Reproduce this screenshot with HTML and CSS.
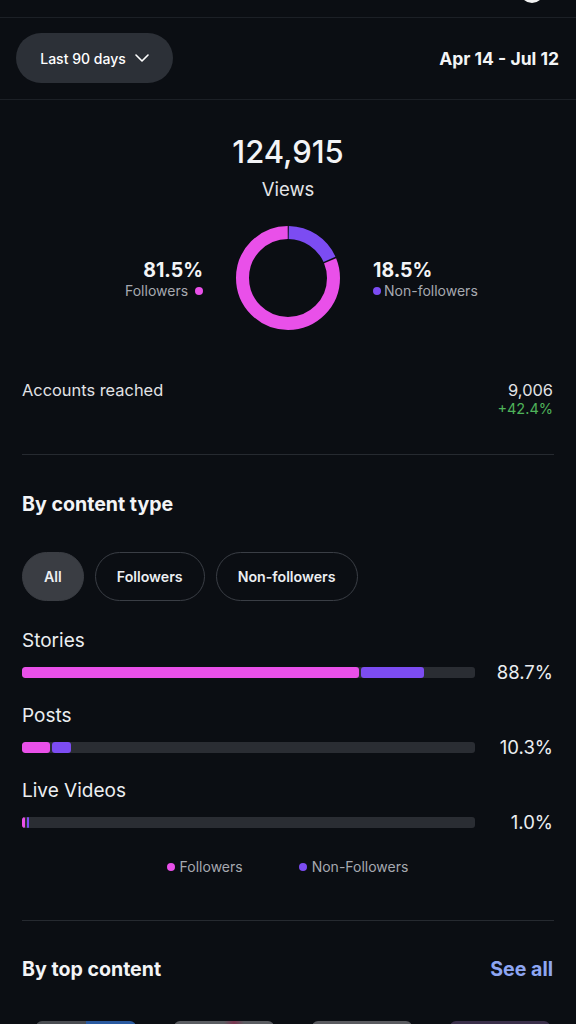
FILE: index.html
```html
<!DOCTYPE html>
<html lang="en">
<head>
<meta charset="utf-8">
<title>Views</title>
<link rel="stylesheet" href="styles.css">
</head>
<body>
<div class="topbar"><span class="top-icon"></span></div>

<div class="range">
  <button class="range-pill">Last 90 days
    <svg class="chev" viewBox="0 0 14 8" width="14" height="8"><path d="M1 1l6 6 6-6" fill="none" stroke="#fff" stroke-width="1.6" stroke-linecap="round" stroke-linejoin="round"/></svg>
  </button>
  <span class="range-dates">Apr 14 - Jul 12</span>
</div>

<section class="overview">
  <div class="total">124,915</div>
  <div class="total-label">Views</div>
  <div class="split">
    <div class="split-side left">
      <div class="split-pct">81.5%</div>
      <div class="split-name">Followers <i class="dot pink"></i></div>
    </div>
    <svg class="donut" viewBox="0 0 104 104" width="104" height="104">
      <g transform="rotate(-90 52 52)">
        <circle cx="52" cy="52" r="45.5" fill="none" stroke="#7c4cf2" stroke-width="13" stroke-dasharray="51.4 300" stroke-dashoffset="-0.75"/>
        <circle cx="52" cy="52" r="45.5" fill="none" stroke="#e950e9" stroke-width="13" stroke-dasharray="231.5 300" stroke-dashoffset="-53.64"/>
      </g>
    </svg>
    <div class="split-side right">
      <div class="split-pct">18.5%</div>
      <div class="split-name"><i class="dot purple"></i>Non-followers</div>
    </div>
  </div>
</section>

<div class="metric">
  <span class="metric-name">Accounts reached</span>
  <div class="metric-vals">
    <div class="metric-num">9,006</div>
    <div class="metric-delta">+42.4%</div>
  </div>
</div>

<hr class="rule rule-after-metric">

<section class="block block-types">
  <h2 class="block-title">By content type</h2>
  <div class="chips">
    <span class="chip active">All</span>
    <span class="chip">Followers</span>
    <span class="chip">Non-followers</span>
  </div>

  <div class="type">
    <div class="type-name">Stories</div>
    <div class="type-row">
      <div class="track">
        <span class="seg pink" style="width:74.4%"></span>
        <span class="seg purple" style="width:13.9%"></span>
      </div>
      <span class="type-pct">88.7%</span>
    </div>
  </div>
  <div class="type">
    <div class="type-name">Posts</div>
    <div class="type-row">
      <div class="track">
        <span class="seg pink" style="width:6.2%"></span>
        <span class="seg purple" style="width:4.2%"></span>
      </div>
      <span class="type-pct">10.3%</span>
    </div>
  </div>
  <div class="type">
    <div class="type-name">Live Videos</div>
    <div class="type-row">
      <div class="track">
        <span class="seg pink" style="width:0.7%"></span>
        <span class="seg purple" style="width:0.5%"></span>
      </div>
      <span class="type-pct">1.0%</span>
    </div>
  </div>

  <div class="legend">
    <span class="legend-item"><i class="dot pink"></i>Followers</span>
    <span class="legend-item"><i class="dot purple"></i>Non-Followers</span>
  </div>
</section>

<hr class="rule">

<section class="block block-top">
  <div class="block-head">
    <h2 class="block-title">By top content</h2>
    <a class="see-all" href="#">See all</a>
  </div>
  <div class="thumbs">
    <span class="thumb t1"></span>
    <span class="thumb t2"></span>
    <span class="thumb t3"></span>
    <span class="thumb t4"></span>
  </div>
</section>
</body>
</html>
```

FILE: styles.css
```css
* { box-sizing: border-box; }

html, body {
  margin: 0;
  background: #0b0e13;
  color: #f3f4f6;
  font-family: Inter, Roboto, "Liberation Sans", sans-serif;
}

body { height: 1024px; overflow: hidden; }

/* status strip with the edge of an icon peeking in */
.topbar {
  height: 18px;
  border-bottom: 1px solid #1c2026;
  display: flex;
  justify-content: flex-end;
  padding-right: 32px;
  overflow: hidden;
}
.top-icon {
  width: 24px;
  height: 24px;
  border-radius: 50%;
  background: #f2f2f2;
  margin-top: -21px;
}

/* date range */
.range {
  display: flex;
  align-items: center;
  justify-content: space-between;
  padding: 15px 17px 16px 16px;
  border-bottom: 1px solid #1c2026;
}
.range-pill {
  height: 50px;
  width: 157px;
  border: 0;
  border-radius: 25px;
  background: #2c3037;
  color: #fff;
  font: 500 14px Inter, Roboto, sans-serif;
  display: flex;
  align-items: center;
  justify-content: center;
  gap: 9px;
  padding: 0;
}
.range-dates {
  font-weight: 700;
  font-size: 17.5px;
}

/* views overview */
.overview {
  display: flex;
  flex-direction: column;
  align-items: center;
  padding-top: 34px;
}
.total {
  font-size: 31px;
  font-weight: 500;
  line-height: 36px;
}
.total-label {
  font-size: 18.5px;
  line-height: 22px;
  margin-top: 8px;
  color: #e4e5e8;
}
.split {
  display: flex;
  align-items: center;
  gap: 33px;
  margin-top: 26px;
}
.split-side { width: 110px; padding-top: 4px; }
.split-side.left { text-align: right; }
.split-pct {
  font-size: 19.5px;
  font-weight: 700;
  line-height: 22px;
}
.split-name {
  font-size: 14px;
  line-height: 20px;
  color: #a6a9b0;
  white-space: nowrap;
}
.dot {
  display: inline-block;
  width: 8px;
  height: 8px;
  border-radius: 50%;
  vertical-align: 1px;
}
.dot.pink { background: #e950e9; }
.dot.purple { background: #7c4cf2; }
.left .dot { margin-left: 3px; }
.right .dot { margin-right: 3px; }

/* accounts reached */
.metric {
  display: flex;
  justify-content: space-between;
  align-items: flex-start;
  padding: 50px 23px 0 22px;
}
.metric-name {
  font-size: 16.4px;
  line-height: 20px;
  color: #e2e3e6;
}
.metric-vals { text-align: right; }
.metric-num {
  font-size: 16.4px;
  line-height: 20px;
  color: #e2e3e6;
}
.metric-delta {
  font-size: 14.5px;
  line-height: 18px;
  color: #4fb35a;
}

.rule {
  border: 0;
  border-top: 1px solid #262a30;
  margin: 0 22px;
}
.rule-after-metric { margin-top: 36px; }

/* content sections */
.block { padding: 0 23px 0 22px; }
.block-title {
  margin: 0;
  font-size: 19.6px;
  font-weight: 700;
  line-height: 24px;
}
.block-types .block-title { margin-top: 37px; }

.chips {
  display: flex;
  gap: 11px;
  margin-top: 36px;
}
.chip {
  height: 49px;
  border-radius: 25px;
  border: 1px solid #3a3e45;
  padding: 0 21px;
  display: flex;
  align-items: center;
  font-size: 14.2px;
  font-weight: 600;
  color: #eceef1;
}
.chip.active {
  background: #3a3d43;
  border-color: #3a3d43;
}

.type { margin-top: 22px; }
.chips + .type { margin-top: 28px; }
.type-name {
  font-size: 19px;
  line-height: 24px;
  color: #eceef1;
}
.type-row {
  display: flex;
  align-items: center;
  height: 20px;
  margin-top: 9px;
}
.track {
  flex: 1;
  height: 11px;
  border-radius: 3px;
  background: #2a2d33;
  display: flex;
  gap: 2px;
  overflow: hidden;
}
.seg { height: 100%; border-radius: 3px; }
.seg.pink { background: #e950e9; }
.seg.purple { background: #7c4cf2; }
.type-pct {
  width: 78px;
  text-align: right;
  font-size: 18.5px;
  color: #eceef1;
}

.legend {
  display: flex;
  justify-content: center;
  gap: 56px;
  margin-top: 27px;
  font-size: 14px;
  line-height: 16px;
  color: #a6a9b0;
}
.legend-item .dot { margin-right: 5px; }
.block-types { padding-bottom: 45px; }

.block-head {
  display: flex;
  justify-content: space-between;
  align-items: center;
  margin-top: 36px;
}
.see-all {
  color: #8ea6f2;
  font-weight: 700;
  font-size: 19.6px;
  text-decoration: none;
}

.thumbs {
  display: flex;
  gap: 38px;
  margin-top: 40px;
  padding-left: 14px;
}
.thumb {
  width: 100px;
  height: 120px;
  border-radius: 6px;
  background: #55585e;
}
.thumb.t1 { background: linear-gradient(90deg, #4a4d52 50%, #2a5aa0 50%); }
.thumb.t2 { background: linear-gradient(90deg, #5b5d62 50%, #7a3550 60%, #5b5d62 70%); }
.thumb.t3 { background: #5a5b60; }
.thumb.t4 { background: #3a2f4a; }
```
